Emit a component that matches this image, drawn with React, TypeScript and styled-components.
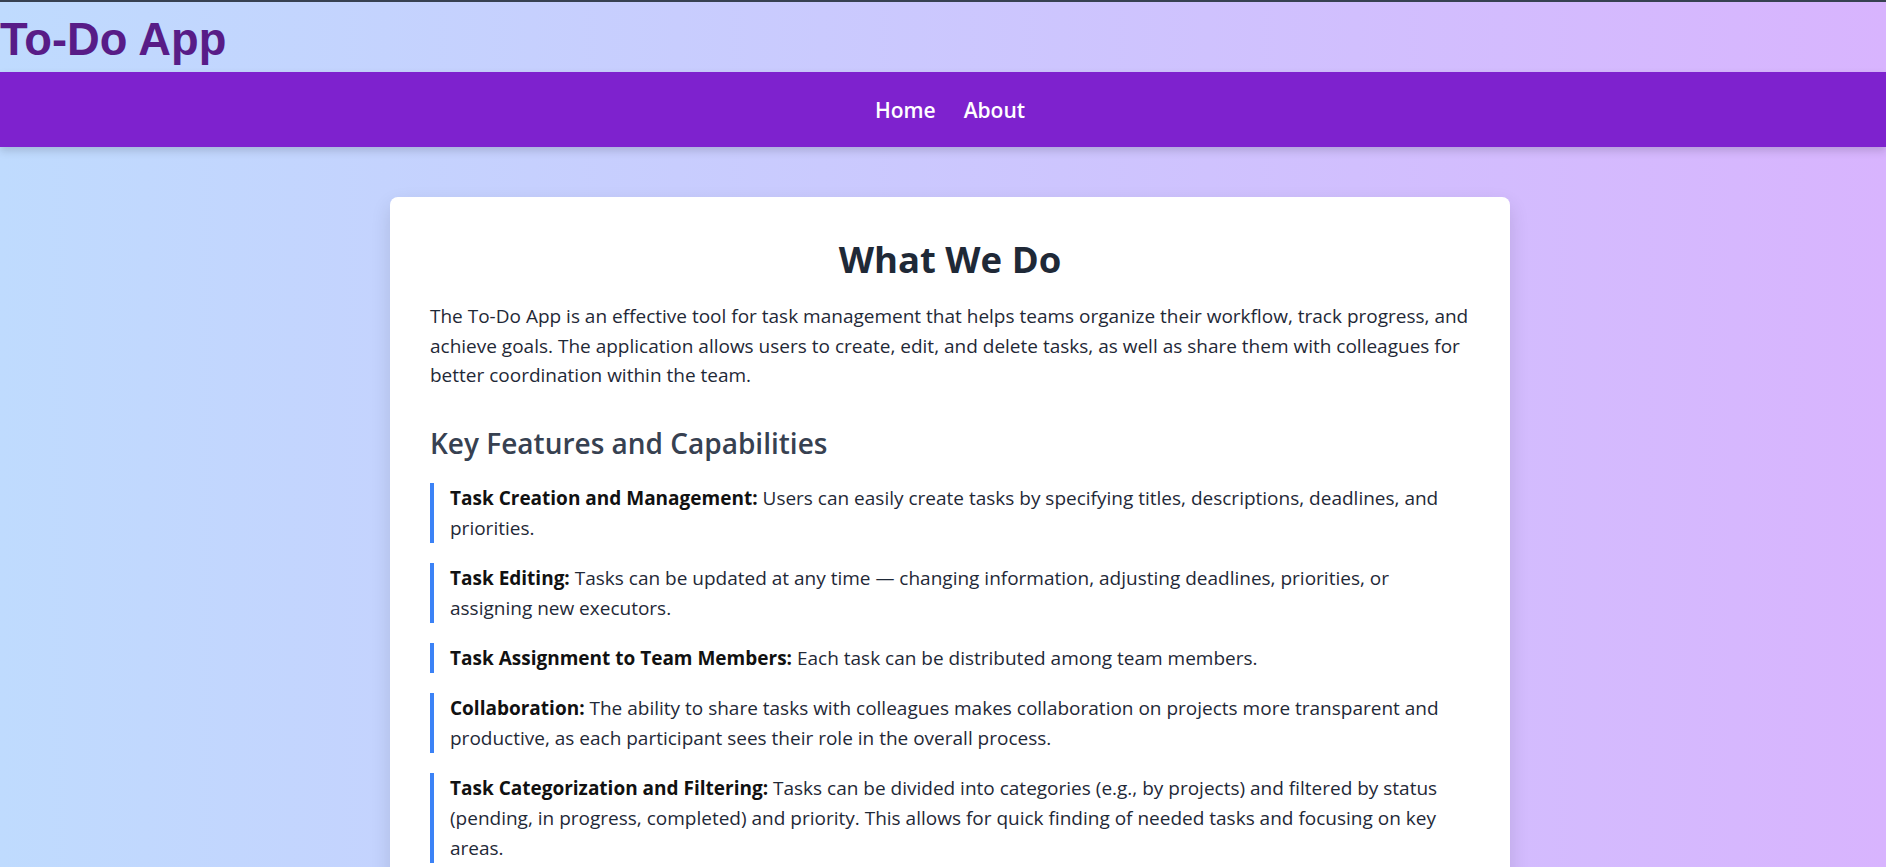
import React from 'react';
import styled, { createGlobalStyle } from 'styled-components';

const GlobalStyle = createGlobalStyle`
  html, body { margin: 0; padding: 0; }
  body {
    min-height: 100vh;
    border-top: 2px solid #374151;
    background: linear-gradient(to right, #bfdbfe, #d8b4fe);
    font-family: 'Open Sans', 'Noto Sans', sans-serif;
  }
`;

const Header = styled.header`
  height: 70px;
  padding-top: 12px;
  box-sizing: border-box;
`;

const Title = styled.h1`
  margin: 0;
  font-family: 'Liberation Sans', Arial, sans-serif;
  font-size: 45.3px;
  line-height: 51px;
  font-weight: 700;
  color: #581c87;
`;

const Nav = styled.nav`
  height: 75px;
  background: #7e22ce;
  display: flex;
  align-items: center;
  justify-content: center;
  gap: 28px;
  padding-left: 14px;
  box-shadow: 0 4px 8px rgba(0, 0, 0, 0.15);
`;

const NavLink = styled.a`
  color: #ffffff;
  font-size: 21px;
  font-weight: 600;
  text-decoration: none;
`;

const Main = styled.main`
  padding: 50px 0 0 14px;
  display: flex;
  justify-content: center;
`;

const Card = styled.section`
  width: 1120px;
  box-sizing: border-box;
  background: #ffffff;
  border-radius: 8px;
  padding: 40px;
  box-shadow: 0 8px 20px rgba(0, 0, 0, 0.12);
`;

const Heading = styled.h2`
  margin: 0 0 21px;
  text-align: center;
  font-size: 36.5px;
  line-height: 44px;
  font-weight: 700;
  color: #1f2937;
`;

const Lead = styled.p`
  margin: 0;
  font-size: 19px;
  line-height: 29.5px;
  color: #1f2937;
`;

const SubHeading = styled.h3`
  margin: 34px 0 22px;
  font-size: 28px;
  line-height: 36px;
  font-weight: 600;
  color: #374151;
`;

const List = styled.ul`
  list-style: none;
  margin: 0;
  padding: 0;
  display: flex;
  flex-direction: column;
  gap: 20px;
`;

const Item = styled.li`
  border-left: 4px solid #3b82f6;
  padding-left: 16px;
  font-size: 19px;
  line-height: 30px;
  color: #1f2937;
`;

const Label = styled.strong`
  font-weight: 700;
  color: #111111;
`;

const features = [
  ['Task Creation and Management:', 'Users can easily create tasks by specifying titles, descriptions, deadlines, and priorities.'],
  ['Task Editing:', 'Tasks can be updated at any time — changing information, adjusting deadlines, priorities, or assigning new executors.'],
  ['Task Assignment to Team Members:', 'Each task can be distributed among team members.'],
  ['Collaboration:', 'The ability to share tasks with colleagues makes collaboration on projects more transparent and productive, as each participant sees their role in the overall process.'],
  ['Task Categorization and Filtering:', 'Tasks can be divided into categories (e.g., by projects) and filtered by status (pending, in progress, completed) and priority. This allows for quick finding of needed tasks and focusing on key areas.'],
];

export default function App() {
  return (
    <>
      <GlobalStyle />
      <Header>
        <Title>To-Do App</Title>
      </Header>
      <Nav>
        <NavLink href="#">Home</NavLink>
        <NavLink href="#">About</NavLink>
      </Nav>
      <Main>
        <Card>
          <Heading>What We Do</Heading>
          <Lead>
            The To-Do App is an effective tool for task management that helps teams organize their workflow, track progress, and achieve goals. The application allows users to create, edit, and delete tasks, as well as share them with colleagues for better coordination within the team.
          </Lead>
          <SubHeading>Key Features and Capabilities</SubHeading>
          <List>
            {features.map(([l, t]) => (
              <Item key={l}>
                <Label>{l}</Label> {t}
              </Item>
            ))}
          </List>
        </Card>
      </Main>
    </>
  );
}
